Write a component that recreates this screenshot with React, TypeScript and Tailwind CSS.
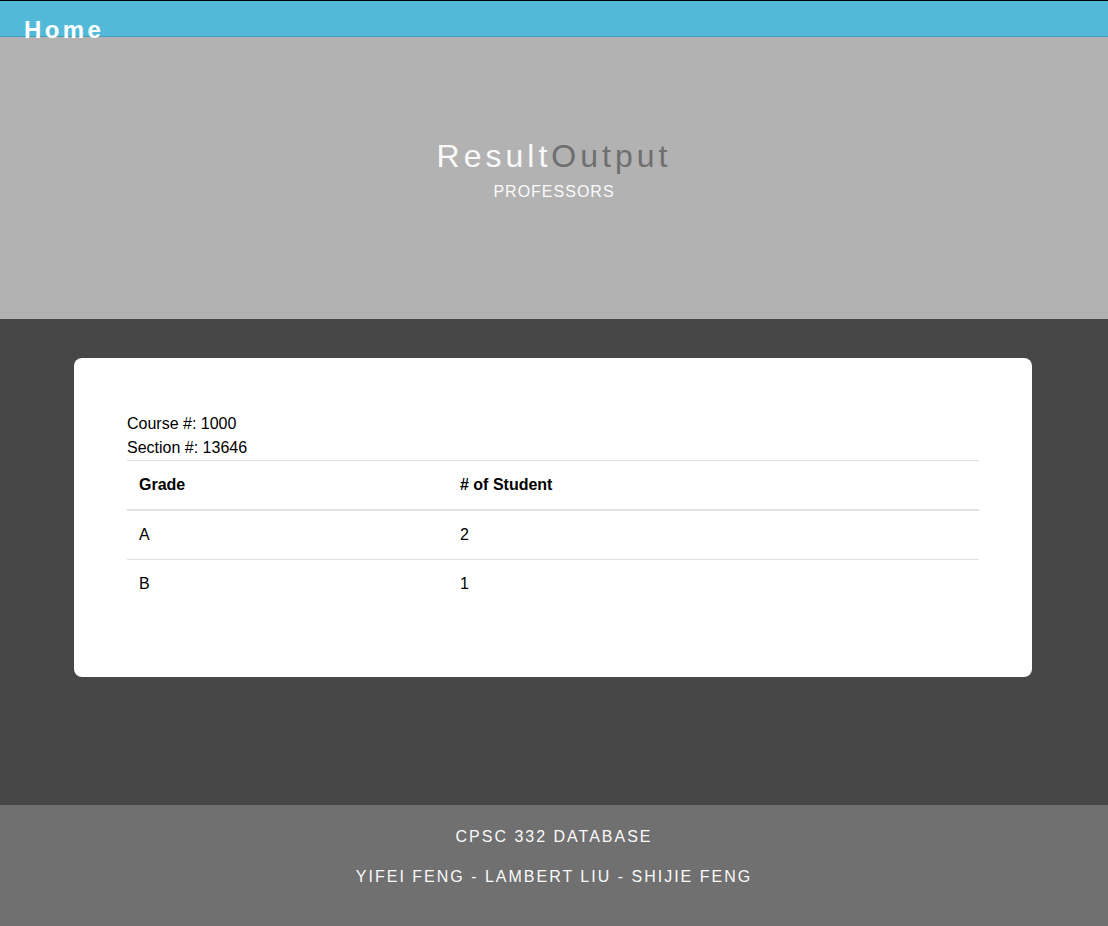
const rows = [
  { grade: 'A', count: 2 },
  { grade: 'B', count: 1 },
];

function NavBar() {
  return (
    <nav className="h-[37px] border-t border-b border-t-black border-b-[#3f9fbc] bg-[#52bad8]">
      <a className="block pl-[24px] pt-[17px] text-[24px] leading-[24px] font-bold tracking-[3.4px] text-white">
        Home
      </a>
    </nav>
  );
}

function Hero() {
  return (
    <header className="h-[282px] bg-[#b2b2b2] pt-[99px] text-center">
      <h1 className="text-[32px] leading-[40px] tracking-[4px] font-normal">
        <span className="text-[#f9f9f9]">Result</span>
        <span className="text-[#6f6f6f]">Output</span>
      </h1>
      <p className="mt-[4px] text-[16px] leading-[24px] tracking-[1px] text-[#fafafa]">PROFESSORS</p>
    </header>
  );
}

function ResultCard() {
  return (
    <div className="ml-[74px] w-[958px] rounded-[8px] bg-white px-[53px] pt-[54px] pb-[69px] text-black">
      <p className="text-[16px] leading-[24px]">Course #: 1000</p>
      <p className="text-[16px] leading-[24px]">Section #: 13646</p>
      <table className="w-full border-collapse text-left text-[16px] leading-[24px]">
        <thead>
          <tr>
            <th className="w-[321px] border-t border-b-2 border-[#dee2e6] p-[12px] font-bold">Grade</th>
            <th className="border-t border-b-2 border-[#dee2e6] p-[12px] font-bold"># of Student</th>
          </tr>
        </thead>
        <tbody>
          {rows.map((row, i) => (
            <tr key={row.grade}>
              <td className={i === 0 ? 'p-[12px]' : 'border-t border-[#dee2e6] p-[12px]'}>{row.grade}</td>
              <td className={i === 0 ? 'p-[12px]' : 'border-t border-[#dee2e6] p-[12px]'}>{row.count}</td>
            </tr>
          ))}
        </tbody>
      </table>
    </div>
  );
}

function Footer() {
  return (
    <footer className="h-[121px] bg-[#707070] pt-[20px] text-center text-[16px] leading-[24px] tracking-[2px] text-[#fafafa]">
      <p>CPSC 332 DATABASE</p>
      <p className="mt-[16px]">YIFEI FENG - LAMBERT LIU - SHIJIE FENG</p>
    </footer>
  );
}

export default function App() {
  return (
    <div className="font-['Liberation_Sans',Arial,sans-serif]">
      <NavBar />
      <Hero />
      <section className="h-[486px] bg-[#474747] pt-[39px]">
        <ResultCard />
      </section>
      <Footer />
    </div>
  );
}
